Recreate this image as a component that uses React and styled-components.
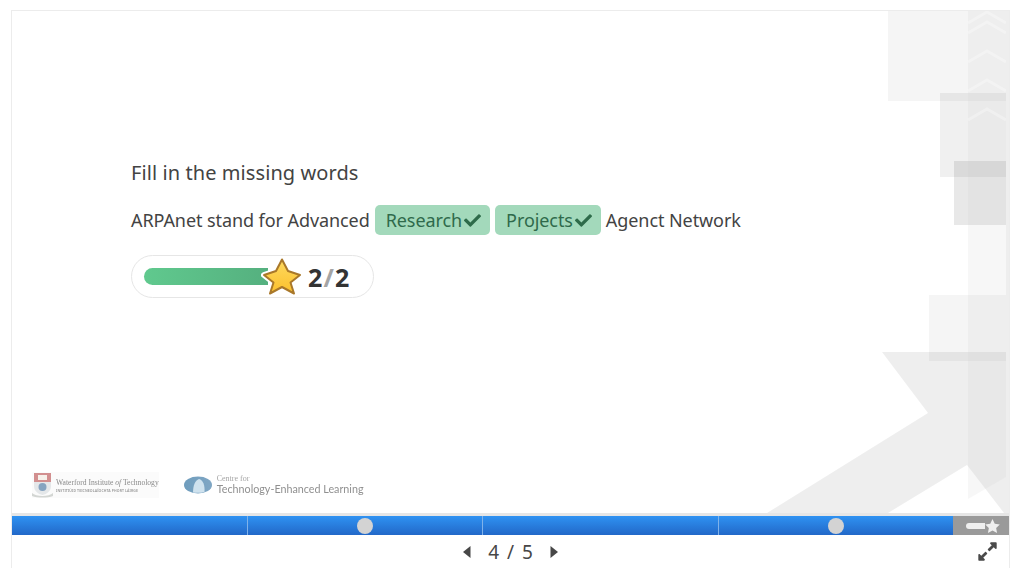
import React from 'react';
import styled, { createGlobalStyle } from 'styled-components';
import { FaCheck, FaExpandAlt } from 'react-icons/fa';

const GlobalStyle = createGlobalStyle`
  html, body { margin: 0; padding: 0; background: #fff; overflow: hidden; }
  body { font-family: "Noto Sans", "Open Sans", sans-serif; color: #434343; }
`

const Frame = styled.div`
  box-sizing: border-box; width: 999px; height: 558px; margin: 10px 0 0 11px;
  border: 1px solid #ececec; border-bottom: none;
  display: flex; flex-direction: column;
`

const Slide = styled.div`
  position: relative; box-sizing: border-box; height: 502px;
  border-right: 3px solid #eeeeee; overflow: hidden;
  display: flex; flex-direction: column; justify-content: space-between;
`

const Backdrop = styled.svg`
  position: absolute; top: 0; left: 0;
`

const Task = styled.div`
  position: relative; padding: 148px 0 0 119px;
`

const Title = styled.div`
  font-size: 20px; line-height: 28px; margin-bottom: 18px; letter-spacing: .08px;
`

const Sentence = styled.div`
  display: flex; align-items: center; gap: 5px; font-size: 18px; line-height: 30px; height: 30px;
  letter-spacing: -.08px;
`

const Chip = styled.span`
  display: inline-flex; align-items: center; gap: 2px; height: 30px; padding: 0 9px 0 11px;
  background: #a3d9bb; color: #2f6a4b; border-radius: 5px;
  svg { font-size: 17px; color: #2e6b4a; }
`

const ScorePill = styled.div`
  box-sizing: border-box; display: flex; align-items: center; width: 243px; height: 43px;
  margin-top: 20px; padding-left: 12px;
  border: 1px solid #e6e6e6; border-radius: 22px;
`

const ScoreBar = styled.div`
  width: 124px; height: 17px; border-radius: 9px 0 0 9px;
  background: linear-gradient(90deg, #60c98e, #55b07f);
`

const Star = styled.svg`
  margin-left: -7px; flex: none;
`

const Score = styled.div`
  margin-left: 5px; font-size: 25px; font-weight: 700; color: #333; letter-spacing: .2px;
  span { color: #a5a5a5; margin: 0 1px; }
`

const Logos = styled.div`
  position: relative; display: flex; align-items: center; gap: 25px;
  padding: 0 0 15px 20px; filter: blur(.45px);
`

const LogoBlock = styled.div`
  display: flex; align-items: center; gap: ${p => p.$gap}px; height: 26px;
  background: ${p => p.$bg || 'transparent'};
`

const WitName = styled.div`
  font-family: "Liberation Serif", serif; font-size: 7.6px; line-height: 10px; color: #8a8a8a; white-space: nowrap;
`

const WitSub = styled.div`
  font-size: 3.5px; line-height: 5px; font-weight: 600; color: #999; white-space: nowrap; letter-spacing: .1px;
`

const CentreFor = styled.div`
  font-family: "Liberation Serif", serif; font-size: 8px; line-height: 8px; color: #a5a5a5;
`

const CentreName = styled.div`
  font-family: Lato, sans-serif; font-size: 10.75px; line-height: 12px; color: #909090; white-space: nowrap;
`

const SeekBar = styled.div`
  display: flex; height: 19px; margin-top: 3px;
  background: linear-gradient(180deg, #2f92f2, #2268c8);
  box-shadow: 0 -3px 0 #e6e6e6;
`

const Segment = styled.div`
  box-sizing: border-box; flex: 0 0 ${p => p.$width}px; display: flex; align-items: center; justify-content: center;
  & + & { border-left: 1px solid #7fb2ea; }
`

const Dot = styled.span`
  width: 16px; height: 16px; margin-left: -1px; border-radius: 50%; background: #d3d3d3;
`

const Stats = styled.div`
  flex: 1; display: flex; align-items: center; justify-content: center; padding-left: 3px; background: #9a9a9a;
`

const StatBar = styled.span`
  width: 19px; height: 6px; border-radius: 3px 0 0 3px; background: #efefef;
`

const Footer = styled.div`
  position: relative; flex: 1; display: flex; align-items: center; justify-content: center; gap: 17px;
  font-size: 19px; color: #474747;
`

const Counter = styled.span`
  word-spacing: 3px;
`

const Expand = styled.span`
  position: absolute; right: 11px; top: 6px; display: flex; font-size: 21px; color: #4a4a4a;
`

const Chevron = ({ y }) => (
  <polyline points={`956,${y + 11} 975,${y} 994,${y + 11}`} fill="none" stroke="#fff" strokeOpacity=".3" strokeWidth="3" />
)

const starPath = 'M21 3.500 L27 15 L39 19 L29.500 26.500 L33 37.500 L21 31 L9 37.500 L12.500 26.500 L3 19 L15 15 Z'

const App = () => {
  return (
    <>
      <GlobalStyle />
      <Frame>
        <Slide>
          <Backdrop width="994" height="502" viewBox="0 0 994 502">
            <rect x="876" y="0" width="118" height="90" fill="#000" opacity=".04" />
            <rect x="928" y="82" width="66" height="84" fill="#000" opacity=".06" />
            <rect x="942" y="150" width="52" height="64" fill="#000" opacity=".09" />
            <rect x="917" y="284" width="77" height="66" fill="#000" opacity=".04" />
            <polygon points="870,341 994,341 994,502 992,502 955,454 876,502 755,502 916,402" fill="#000" opacity=".066" />
            <polygon points="956,0 994,0 994,466 956,488" fill="#ccc" opacity=".157" />
            <Chevron y={1} />
            <Chevron y={11} />
            <Chevron y={40} />
            <Chevron y={69} />
            <Chevron y={98} />
          </Backdrop>
          <Task>
            <Title>Fill in the missing words</Title>
            <Sentence>
              ARPAnet stand for Advanced
              <Chip>Research<FaCheck /></Chip>
              <Chip>Projects<FaCheck /></Chip>
              Agenct Network
            </Sentence>
            <ScorePill>
              <ScoreBar />
              <Star width="42" height="42" viewBox="0 0 42 42">
                <defs>
                  <linearGradient id="starFill" x1="0" y1="0" x2="0" y2="1">
                    <stop offset="0" stopColor="#fdd95f" />
                    <stop offset="1" stopColor="#fcc02c" />
                  </linearGradient>
                </defs>
                <path d={starPath} fill="#fff" stroke="#fff" strokeWidth="6" strokeLinejoin="round" />
                <path d={starPath} fill="url(#starFill)" stroke="#a9782a" strokeWidth="2" strokeLinejoin="round" />
              </Star>
              <Score>2<span>/</span>2</Score>
            </ScorePill>
          </Task>
          <Logos>
            <LogoBlock $gap={3} $bg="#fbfbfb">
              <svg width="21" height="26" viewBox="0 0 21 26">
                <path d="M2 1h17v13c0 5-4 8-8.500 9C6 22 2 19 2 14z" fill="#e4e7e9" />
                <rect x="2" y="1" width="17" height="9" fill="#d28f8f" />
                <rect x="6" y="3" width="9" height="5" fill="#f6f0ea" />
                <circle cx="10.500" cy="15" r="4" fill="#86a4c0" />
                <path d="M0 21c4 4 17 4 21 0v3c-5 2-16 2-21 0z" fill="#d3d6d3" />
              </svg>
              <div>
                <WitName>Waterford Institute <i>of</i> Technology</WitName>
                <WitSub>INSTITIÚID TEICNEOLAÍOCHTA PHORT LÁIRGE</WitSub>
              </div>
            </LogoBlock>
            <LogoBlock $gap={5}>
              <svg width="28" height="18" viewBox="0 0 28 18">
                <defs>
                  <linearGradient id="ovalFill" x1="0" y1="0" x2="1" y2="0">
                    <stop offset="0" stopColor="#6f9dbd" />
                    <stop offset="1" stopColor="#7fa6c4" />
                  </linearGradient>
                </defs>
                <ellipse cx="14" cy="9" rx="14" ry="8.500" fill="url(#ovalFill)" />
                <path d="M9 16.500c0-7 2-12 6-13.500 4 1 6 6 5.500 13-3 1-8.500 1-11.500.500z" fill="#cfe2ee" />
              </svg>
              <div>
                <CentreFor>Centre for</CentreFor>
                <CentreName>Technology-Enhanced Learning</CentreName>
              </div>
            </LogoBlock>
          </Logos>
        </Slide>
        <SeekBar>
          <Segment $width={235} />
          <Segment $width={235}><Dot /></Segment>
          <Segment $width={236} />
          <Segment $width={235}><Dot /></Segment>
          <Stats>
            <StatBar />
            <svg width="15" height="14" viewBox="0 0 24 23">
              <path d="M12 0l3.700 7.800 8.300 1.100-6 5.900 1.500 8.200-7.500-4-7.500 4 1.500-8.200-6-5.900 8.300-1.100z" fill="#efefef" />
            </svg>
          </Stats>
        </SeekBar>
        <Footer>
          <svg width="8" height="12" viewBox="0 0 8 12"><polygon points="7.500,0 7.500,12 0,6" fill="#474747" /></svg>
          <Counter>4 / 5</Counter>
          <svg width="8" height="12" viewBox="0 0 8 12"><polygon points="0.500,0 0.500,12 8,6" fill="#474747" /></svg>
          <Expand><FaExpandAlt /></Expand>
        </Footer>
      </Frame>
    </>
  )
}

export default App;
